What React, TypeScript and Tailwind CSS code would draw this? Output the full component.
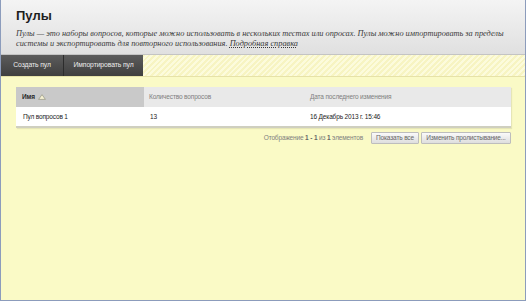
export default function App() {
  return (
    <div className="w-[526px] h-[301px] overflow-hidden flex flex-col bg-[#fafac6] border-x border-b border-[#8c9cbc] font-['Liberation_Sans',Arial,sans-serif]">
      {/* Page header */}
      <div className="h-[55px] shrink-0 bg-gradient-to-b from-[#f4f4f4] to-[#e0e0e0] border-b border-[#c4c4c4] pl-[15px] pt-[8px]">
        <h1 className="text-[13px] leading-[16px] font-bold text-[#1e1e1e]">Пулы</h1>
        <p className="mt-[5px] font-['Liberation_Serif',Georgia,serif] italic text-[8.3px] leading-[10px] text-[#3a3a3a]">
          Пулы — это наборы вопросов, которые можно использовать в нескольких тестах или опросах. Пулы можно импортировать за пределы
          <br />
          системы и экспортировать для повторного использования.{' '}
          <span className="underline decoration-dotted underline-offset-1">Подробная справка</span>
        </p>
      </div>

      {/* Action bar */}
      <div className="h-[22px] shrink-0 flex bg-[repeating-linear-gradient(135deg,#f7f4c2_0px,#f7f4c2_2px,#fcfbdc_2px,#fcfbdc_4px)] border-b border-[#e6e2a8]">
        <button className="h-full w-[63px] bg-gradient-to-b from-[#5c5c5c] to-[#3f3f3f] text-[#ececec] text-[6.8px] tracking-[-0.1px] border-r border-[#2c2c2c]">
          Создать пул
        </button>
        <button className="h-full w-[79px] bg-gradient-to-b from-[#5c5c5c] to-[#3f3f3f] text-[#ececec] text-[6.8px] tracking-[-0.1px]">
          Импортировать пул
        </button>
      </div>

      {/* Content */}
      <div className="pl-[15px] pt-[10px]">
        <div className="w-[495px] shadow-[1px_1px_1px_rgba(0,0,0,0.08)] border-b-2 border-[#cfcfc0]">
          <div className="grid grid-cols-[128px_161px_206px] h-[20px] text-[6.5px] tracking-[-0.15px] bg-[#e9e9e9]">
            <div className="bg-[#c9c9c9] flex items-center pl-[6px] gap-[3px] font-bold text-[#2a2a2a]">
              Имя
              <svg width="8" height="6" viewBox="0 0 8 6">
                <path d="M4 0.6 L7.4 5.4 H0.6 Z" fill="#f6f1d2" stroke="#9a9a8a" strokeWidth="0.8" />
              </svg>
            </div>
            <div className="flex items-center pl-[5px] text-[#808080]">Количество вопросов</div>
            <div className="flex items-center pl-[5px] text-[#808080]">Дата последнего изменения</div>
          </div>
          <div className="grid grid-cols-[128px_161px_206px] h-[19px] text-[6.5px] tracking-[-0.15px] bg-white text-[#222]">
            <div className="flex items-center pl-[7px]">Пул вопросов 1</div>
            <div className="flex items-center pl-[6px]">13</div>
            <div className="flex items-center pl-[5px]">16 Декабрь 2013 г. 15:46</div>
          </div>
        </div>

        {/* Pagination */}
        <div className="w-[495px] flex justify-end items-center mt-[4px] text-[6.5px] tracking-[-0.15px]">
          <span className="text-[#808080] mr-[8px]">
            Отображение <b className="text-[#666]">1 - 1</b> из <b className="text-[#666]">1</b> элементов
          </span>
          <button className="h-[12px] w-[48px] bg-gradient-to-b from-[#fafafa] to-[#dedede] border border-[#bdbdbd] rounded-[1px] text-[#666] mr-[2px]">
            Показать все
          </button>
          <button className="h-[12px] w-[90px] bg-gradient-to-b from-[#fafafa] to-[#dedede] border border-[#bdbdbd] rounded-[1px] text-[#666]">
            Изменить пролистывание...
          </button>
        </div>
      </div>
    </div>
  );
}
